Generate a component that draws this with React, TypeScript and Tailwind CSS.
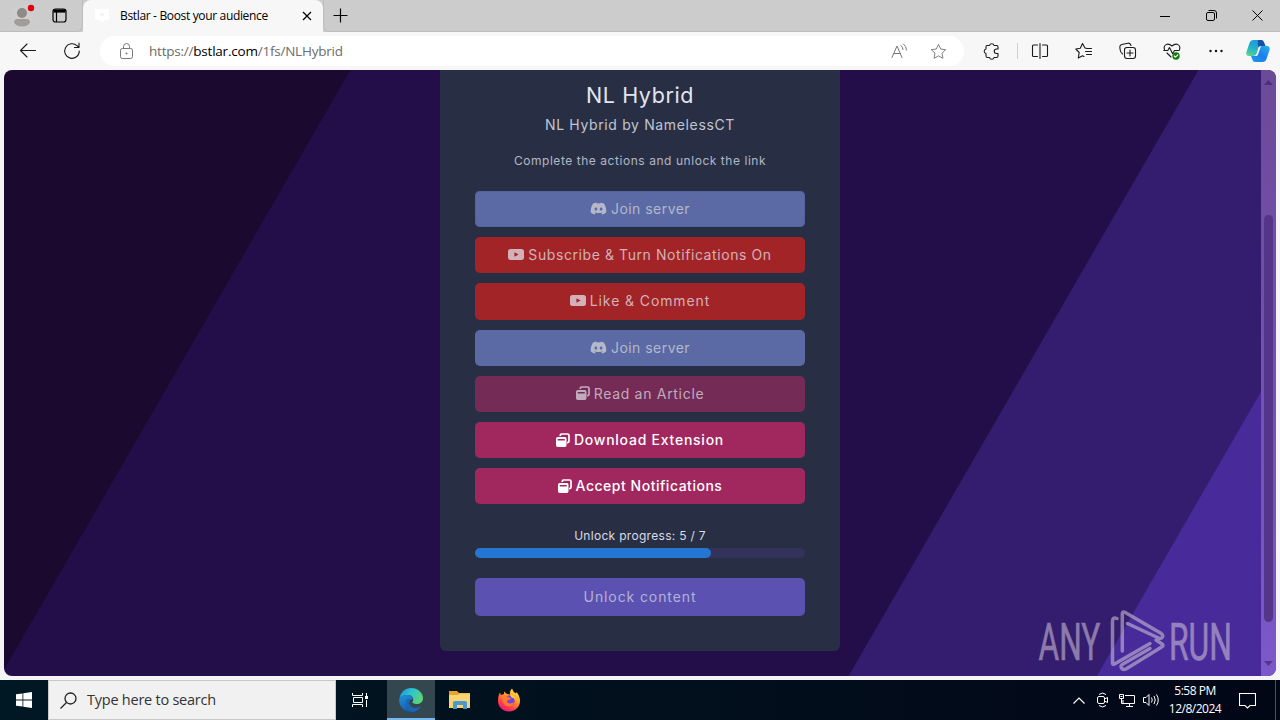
import React from "react";
import { FaDiscord } from "react-icons/fa";

const YoutubeIcon = () => (
  <svg width="16" height="11" viewBox="0 0 15 11" className="shrink-0" preserveAspectRatio="none">
    <path
      fillRule="evenodd"
      fill="currentColor"
      d="M2.500 0h10A2.500 2.500 0 0 1 15 2.500v6A2.500 2.500 0 0 1 12.500 11h-10A2.500 2.500 0 0 1 0 8.500v-6A2.500 2.500 0 0 1 2.500 0ZM6 3.200v4.600l4-2.300Z"
    />
  </svg>
);

const WindowIcon = () => (
  <svg width="14" height="14" viewBox="0 0 14 14" className="shrink-0" fill="none">
    <path d="M4.300 3V2.300Q4.300 1 5.600 1h6Q13 1 13 2.300v6q0 1.300-1.300 1.300H11" stroke="currentColor" strokeWidth="1.700" />
    <path
      fillRule="evenodd"
      fill="currentColor"
      d="M1.700 4h7.100q1.700 0 1.700 1.700v6.600Q10.500 14 8.800 14H1.700Q0 14 0 12.300V5.700Q0 4 1.700 4ZM1.700 6v1.500h7.100V6Z"
    />
  </svg>
);

const actions = [
  { label: "Join server", icon: "discord", style: "bg-[#5b69a5] text-[#b4b8c9] ring-1 ring-inset ring-[#53639f]", text: "tracking-[0.46px]" },
  { label: "Subscribe & Turn Notifications On", icon: "youtube", style: "bg-[#a22427] text-[#d3b1b8]", text: "tracking-[0.58px]" },
  { label: "Like & Comment", icon: "youtube", style: "bg-[#a22427] text-[#d3b1b8]", text: "tracking-[0.9px]" },
  { label: "Join server", icon: "discord", style: "bg-[#5b69a5] text-[#b4b8c9]", text: "tracking-[0.46px]" },
  { label: "Read an Article", icon: "window", style: "bg-[#742b56] text-[#c2aabe]", text: "tracking-[0.7px]" },
  { label: "Download Extension", icon: "window", style: "bg-[#a0285f] text-white", text: "font-medium tracking-[0.75px]" },
  { label: "Accept Notifications", icon: "window", style: "bg-[#a0285f] text-white", text: "font-medium tracking-[0.52px]" },
];

const TitleBar = () => (
  <div className="flex h-8 bg-[#cccccc] text-black">
    <div className="flex w-[83px] items-center rounded-br-md border-b border-r border-[#bdbdbd]">
      <svg width="32" height="32" viewBox="0 0 32 32" className="ml-1">
        <circle cx="18" cy="16" r="11.500" fill="#d0cecd" />
        <circle cx="18" cy="13" r="5" fill="#8d8a88" />
        <path d="M10 22.500q0-3.500 3.500-3.500h9q3.500 0 3.500 3.500-2 4-8 4t-8-4Z" fill="#a09d9b" />
        <circle cx="27" cy="8" r="3.200" fill="#e0000f" />
      </svg>
      <svg width="15" height="15" viewBox="0 0 15 15" className="ml-4" fill="none" stroke="black" strokeWidth="1.200">
        <rect x="1" y="1" width="13" height="13" rx="2.500" />
        <path d="M1.500 3h12" strokeWidth="3.200" />
        <path d="M4.500 4v10" />
      </svg>
    </div>
    <div className="flex w-60 items-center rounded-t-lg bg-[#f7f7f7] pl-2.5">
      <svg width="18" height="16" viewBox="0 0 18 16">
        <path d="M2 1h14v11h-4l-3 3-2-3H2Z" fill="white" />
        <path d="M9 9 6.800 6.800a1.300 1.300 0 0 1 2.200-1.300 1.300 1.300 0 0 1 2.200 1.300Z" fill="#f3f1f8" />
      </svg>
      <span className="ml-[9px] w-[182px] whitespace-nowrap text-[12px] tracking-[-0.34px]">Bstlar - Boost your audience</span>
      <svg width="10" height="10" viewBox="0 0 10 10" stroke="black" strokeWidth="1.200">
        <path d="m1 1 8 8M9 1 1 9" />
      </svg>
    </div>
    <div className="flex flex-1 items-center rounded-bl-md border-b border-l border-[#bdbdbd] pl-[9px]">
      <svg width="15" height="15" viewBox="0 0 15 15" stroke="black" strokeWidth="1.200">
        <path d="M7.500.5v14M.5 7.500h14" />
      </svg>
    </div>
    <div className="flex w-[138px] border-b border-[#bdbdbd]">
      <div className="flex w-[46px] items-center justify-center">
        <svg width="10" height="10" stroke="black"><path d="M0 5.500h10" /></svg>
      </div>
      <div className="flex w-[46px] items-center justify-center">
        <svg width="11" height="11" viewBox="0 0 11 11" fill="none" stroke="black">
          <rect x=".5" y="2.500" width="8" height="8" rx="1.500" />
          <path d="M2.500.5H8A2.500 2.500 0 0 1 10.500 3v5.500" />
        </svg>
      </div>
      <div className="flex w-[46px] items-center justify-center">
        <svg width="11" height="11" stroke="black"><path d="m.5.5 10 10M10.500.5l-10 10" /></svg>
      </div>
    </div>
  </div>
);

const ToolButton = ({ children }: { children: React.ReactNode }) => (
  <div className="flex w-11 shrink-0 items-center justify-center">
    <svg width="18" height="18" viewBox="0 0 18 18" fill="none" stroke="#1b1b1b" strokeWidth="1.100" strokeLinejoin="round" strokeLinecap="round">
      {children}
    </svg>
  </div>
);

const Toolbar = () => (
  <div className="flex h-[38px] bg-[#f7f7f7] pl-1.5">
    <ToolButton><path d="M16.500 8.500H1.500M8 2 1.500 8.500 8 15" /></ToolButton>
    <ToolButton><path d="M16.300 9a7.300 7.300 0 1 1-2.300-5.300L16 5.500M16 1v4.500h-4.500" /></ToolButton>
    <div className="ml-1.5 mt-1 flex h-[30px] w-[864px] items-center rounded-full bg-white pl-5">
      <svg width="13" height="16" viewBox="0 0 13 16" fill="none" stroke="#777">
        <rect x=".5" y="5.500" width="12" height="10" rx="1.800" />
        <path d="M3.500 5.500V3.500a3 3 0 0 1 6 0v2" />
        <circle cx="6.500" cy="10.500" r=".6" fill="#777" />
      </svg>
      <p className="ml-4 flex-1 whitespace-nowrap text-[13.5px] tracking-[-0.22px] text-[#6b6b6b]">
        https://<span className="text-black">bstlar.com</span>/1fs/NLHybrid
      </p>
      <svg width="17" height="16" viewBox="0 0 17 16" fill="none" stroke="#777" strokeLinecap="round">
        <path d="m1 14.500 5-11.500 5 11.500M2.800 10.500h6.400M10 2.500q2 1.500 2 4M12.500 1q3 2.200 3 6" />
      </svg>
      <svg width="17" height="17" viewBox="0 0 18 18" fill="none" stroke="#777" className="ml-[22px] mr-[17px]" strokeLinejoin="round">
        <path d="m9 1.500 2.300 4.900 5.300.7-3.900 3.700 1 5.400L9 13.600l-4.700 2.600 1-5.400-3.900-3.700 5.300-.7Z" />
      </svg>
    </div>
    <div className="ml-[5px] flex">
      <ToolButton><path d="M5 3.500h2.500a2.300 2.300 0 0 1 4.500 0h2.500q1.500 0 1.500 1.500v2h-1.500a2 2 0 0 0 0 4.500H16V14q0 1.500-1.500 1.500H12a2.300 2.300 0 0 1-4.500 0H5.500Q4 15.500 4 14v-2.500a2.300 2.300 0 0 1 0-4.500V5q0-1.500 1-1.500Z" /></ToolButton>
    </div>
    <div className="my-[11px] w-[5px] border-r border-[#cfcfcf]" />
    <ToolButton><path d="M6.500 3h-4Q1.500 3 1.500 4v9.500q0 1 1 1h4M11.500 3h4q1 0 1 1v9.500q0 1-1 1h-4M9 1.500v15" /></ToolButton>
    <ToolButton><path d="M12 6.500 10 6 7.500 1.500 5.300 6.200.8 7l3.400 3.500-.9 5.500 4.200-2.300 1.500.8M11.500 6.500h5M10.500 9.500h6M11.500 12.500h5" /></ToolButton>
    <ToolButton>
      <rect x="5.500" y="5.500" width="11" height="11" rx="2.500" />
      <path d="M11 8v6M8 11h6M3.500 12Q1.500 10.500 1.200 8L.8 5q0-2 2-2.500l6-1.300q2.500-.5 3.200 2.300" />
    </ToolButton>
    <ToolButton>
      <path d="M1.500 7.500C0 3 4.500.2 9 4c4.500-3.800 9-1 7.500 3.500M.8 8.500h4l1.700-3 3 6 2-3h4.700M4 11l4 4" />
      <circle cx="13" cy="14" r="3.700" fill="#107c10" stroke="none" />
      <path d="m11.300 14 1.200 1.200 2.300-2.300" stroke="white" />
    </ToolButton>
    <ToolButton>
      <g fill="#111" stroke="none"><circle cx="3.500" cy="9" r="1.200" /><circle cx="9" cy="9" r="1.200" /><circle cx="14.500" cy="9" r="1.200" /></g>
    </ToolButton>
    <div className="flex w-10 items-center justify-center">
      <svg width="24" height="24" viewBox="0 0 24 24">
        <defs>
          <linearGradient id="copLeft" x1=".5" y1="0" x2=".2" y2="1">
            <stop offset="0" stopColor="#1b9be0" />
            <stop offset=".5" stopColor="#25b0c8" />
            <stop offset="1" stopColor="#55d690" />
          </linearGradient>
          <linearGradient id="copRight" x1="1" y1="0" x2="0" y2="1">
            <stop offset="0" stopColor="#28b4ee" />
            <stop offset=".5" stopColor="#1a80ea" />
            <stop offset="1" stopColor="#2596ee" />
          </linearGradient>
        </defs>
        <path d="M7.500 1H15q2 0 2.700 2.500L19 7h-4q-2 0-2.700 2.500L10.500 15q-.7 2-3 2H3Q-.3 17 .4 13L3.500 4Q4.500 1 7.500 1Z" fill="url(#copLeft)" />
        <path d="M12 1h3.500q2 0 2.600 2.500L19.500 7H15q-1.500 0-2.300 1.500Q11 5 12 1Z" fill="#1650a8" />
        <path d="M16.500 23H9q-2 0-2.700-2.500L5 17h3q2 0 2.700-2.500L12.500 9q.7-2 3-2H21q3.300 0 2.600 4l-3.100 9q-1 3-4 3Z" fill="url(#copRight)" />
        <path d="M12.700 8 15 7l-3 8.500q-.5 1.500-2.500 1.500H8q2-.3 2.700-2.500Z" fill="white" />
      </svg>
    </div>
  </div>
);

const UnlockCard = () => (
  <div className="ml-[436px] h-[581px] w-[400px] rounded-b-md bg-[#282f44] px-[35px] text-center font-[Inter,sans-serif]">
    <h1 className="pt-[9px] text-[21.5px] leading-8 tracking-[0.6px] text-[#e3e6ee]">NL Hybrid</h1>
    <h2 className="mt-1 text-[14px] leading-5 tracking-[0.64px] text-[#c1c5d2]">NL Hybrid by NamelessCT</h2>
    <p className="mt-4 text-[12px] leading-5 tracking-[0.55px] text-[#b2b7c6]">Complete the actions and unlock the link</p>
    <div className="mt-5 flex flex-col gap-2.5">
      {actions.map((a, i) => (
        <div key={i} className={`flex h-[36.2px] items-center justify-center gap-1 rounded-[5px] pb-px ${a.style}`}>
          {a.icon === "discord" && <FaDiscord size={17} />}
          {a.icon === "youtube" && <YoutubeIcon />}
          {a.icon === "window" && <WindowIcon />}
          <span className={`whitespace-nowrap text-[14px] ${a.text}`}>{a.label}</span>
        </div>
      ))}
    </div>
    <p className="mt-6 text-[12px] leading-4 tracking-[0.3px] text-[#d9dce4]">Unlock progress: 5 / 7</p>
    <div className="mt-1 h-2.5 rounded-full bg-[#33325a]">
      <div className="h-full w-5/7 rounded-full bg-[#2576d2]" />
    </div>
    <div className="mt-5 h-[38px] rounded-[5px] bg-[#5a51b0] text-[14px] leading-[38px] tracking-[0.9px] text-[#b5b1d6]">Unlock content</div>
  </div>
);

const Watermark = () => (
  <svg width="194" height="64" viewBox="0 0 194 64" className="absolute left-[1034px] top-[539px] opacity-55">
    <g fill="#d5c8dc" stroke="#d5c8dc" strokeWidth=".6" fontFamily="Roboto, sans-serif" fontSize="51">
      <text transform="translate(.5 50.500) scale(.63 1)" textLength="98" lengthAdjust="spacingAndGlyphs">ANY</text>
      <text transform="translate(131 50.500) scale(.63 1)" textLength="100" lengthAdjust="spacingAndGlyphs">RUN</text>
    </g>
    <g fill="none" stroke="#d5c8dc" strokeWidth="3.500" strokeLinejoin="round" strokeLinecap="round">
      <path d="M84.300 42V5q0-3 3-1.500L122.500 24q4 2.500 1 5-2 1-4-.5L89.500 14.500" />
      <path d="M79 9.500q-4.500-2-4.500 3V54q0 2 2 1l35.500-20.500" />
      <path d="M118 31l6 4q2 1.500 0 2.800L88 60q-3 1.500-4.500-1t1.500-4l27-15.500" />
    </g>
  </svg>
);

const Page = () => (
  <div className="flex h-[610px] bg-[#f5f5f8] px-1 pb-1">
    <div className="relative flex w-[1272px] overflow-hidden rounded-lg bg-[linear-gradient(120deg,#1b0930_299.500px,#240e49_300.500px,#240e49_1034px,#341c6e_1035px,#341c6e_1249px,#482a9b_1250px)]">
      <UnlockCard />
      <div className="ml-auto flex w-[15px] flex-col items-center bg-linear-to-b from-[#6b4a98] to-[#7c58ca]">
        <svg width="9" height="5" className="mt-[10px]"><path d="M4.500 0 9 5H0Z" fill="#4c2f77" /></svg>
        <div className="mt-[130px] h-[407px] w-[9px] rounded-full bg-[#553589]" />
        <svg width="9" height="5" className="mt-[39px]"><path d="M0 0h9L4.500 5Z" fill="#553589" /></svg>
      </div>
      <Watermark />
    </div>
  </div>
);

const Taskbar = () => (
  <div className="flex h-10 bg-linear-to-r from-[#001823] to-[#020716] text-white">
    <div className="flex w-12 items-center justify-center">
      <svg width="16" height="16" viewBox="0 0 16 16" fill="white">
        <path d="M0 2.300 6.500 1.400v6.200H0ZM7.300 1.300 16 0v7.600H7.300ZM0 8.400h6.500v6.200L0 13.700ZM7.300 8.400H16V16l-8.700-1.300Z" />
      </svg>
    </div>
    <div className="flex w-72 items-center border border-[#c9c9c9] bg-[#f1f1f1] pl-[11px]">
      <svg width="17" height="17" viewBox="0 0 17 17" fill="none" stroke="#222" strokeWidth="1.300">
        <circle cx="10.500" cy="6.500" r="5.500" />
        <path d="m6.500 10.500-6 6" />
      </svg>
      <span className="ml-[10px] text-[14.500px] tracking-[-0.24px] text-[#333]">Type here to search</span>
    </div>
    <div className="flex w-12 items-center justify-center">
      <svg width="16" height="16" viewBox="0 0 16 16" fill="none" stroke="white">
        <path d="M.5 1v2.500h10V1M.5 15v-2.500h10V15M1.500 5.500h9v5h-9zM14.500 1v3M14.500 8v7" />
        <path d="M13 5.500h3" strokeWidth="3" />
      </svg>
    </div>
    <div className="ml-[3px] flex w-12 items-center justify-center border-b-2 border-[#76b9ed] bg-[#34474f] pt-0.5">
      <svg width="24" height="24" viewBox="0 0 24 24">
        <defs>
          <linearGradient id="edgeTop" x1="0" y1="0" x2="1" y2=".4">
            <stop offset="0" stopColor="#178fd8" />
            <stop offset=".5" stopColor="#2cc3d2" />
            <stop offset="1" stopColor="#58d47b" />
          </linearGradient>
          <linearGradient id="edgeBody" x1="0" y1="0" x2=".6" y2="1">
            <stop offset="0" stopColor="#2193da" />
            <stop offset="1" stopColor="#1356a3" />
          </linearGradient>
        </defs>
        <path d="M.5 10.500C1.500 4 6.500 0 12 0c7 0 12 5 12 10 0 4-3 6-6.500 6-3 0-4.500-1.200-4-2 1.500-2 1-6.500-4-7C5.500 6.700 2 8 .5 10.500Z" fill="url(#edgeTop)" />
        <path d="M.2 11C2 7.500 6 6.500 9.500 7c2.500.4 4.300 2.200 4.500 4-3.500 0-5 3.500-3.500 6.500 2 3.500 7 4 11.500 1-2 3.500-5.500 5.500-10 5.500C5 24-.5 18 .2 11Z" fill="url(#edgeBody)" />
        <path d="M8.500 11c-3.500 4-2 11 4.500 13 4-.2 7.300-2.500 9-5.500-5 2.500-9.500 1.500-11.300-1.700C9.500 14.500 10.500 12 12 11Z" fill="#1b65b3" />
      </svg>
    </div>
    <div className="ml-px flex w-12 items-center justify-center">
      <svg width="22" height="18" viewBox="0 0 22 18">
        <path d="M0 0h8l2 2h11v15H0Z" fill="#e6a52c" />
        <path d="M0 4h9l1.500-1.500H21V17H0Z" fill="#f8d473" />
        <path d="M4 18v-6q0-2 2-2h10q2 0 2 2v6h-4v-4H8v4Z" fill="#4a9ad0" />
        <path d="M8 14.500h6V17H8Z" fill="#f8d473" />
      </svg>
    </div>
    <div className="ml-px flex w-12 items-center justify-center">
      <svg width="24" height="24" viewBox="0 0 24 24">
        <defs>
          <linearGradient id="foxFire" x1=".8" y1="0" x2=".2" y2="1">
            <stop offset="0" stopColor="#fff04a" />
            <stop offset=".4" stopColor="#ff9a24" />
            <stop offset=".75" stopColor="#ff3850" />
            <stop offset="1" stopColor="#e31587" />
          </linearGradient>
        </defs>
        <path d="M3 4.500 4 7l3-1V3.500L10 6l3 .5Q12.500 3 15 .5q1 3.500 4 5l.5-1.500Q23 8 23 13c0 6-5 10.500-11 10.500S1 19 1 13c0-3 .5-6 2-8.500Z" fill="url(#foxFire)" />
        <circle cx="12.500" cy="12.500" r="5.200" fill="#7542e5" />
        <path d="M5 8q4-2 6 1l3 1q-.5 2-3.500 2.300-1.500 2 1.500 3 3 .5 5-1-1.500 4.500-6 4.200Q5 17.500 5 8Z" fill="#ff7a2c" />
        <path d="M13 6.500q5 1 5.500 6-1.500-3-4-3Z" fill="#ffcf36" />
      </svg>
    </div>
    <div className="ml-auto flex">
      <div className="flex w-6 items-center justify-center">
        <svg width="12" height="7" fill="none" stroke="white" strokeWidth="1.200"><path d="m.5 6.500 5.500-5.500 5.500 5.500" /></svg>
      </div>
      <div className="flex w-6 items-center justify-center">
        <svg width="12" height="16" viewBox="0 0 12 16" fill="none" stroke="white">
          <rect x=".5" y="4.500" width="7" height="7" rx="1.500" />
          <path d="m7.500 7 3-1.500v5l-3-1.500M2 2.500Q5.500-.5 9 2.500M2 13.500q3.500 3 7 0" />
        </svg>
      </div>
      <div className="flex w-6 items-center justify-center">
        <svg width="16" height="15" viewBox="0 0 16 15" fill="none" stroke="white">
          <path d="M6 2.500h9.500v8H4V7M10.500 10.500v3M7 13.500h7M.5 1.500h4v4h-4zM2.500 5.500v5H4M1.500 3.500h2" />
        </svg>
      </div>
      <div className="flex w-6 items-center justify-center">
        <svg width="17" height="14" viewBox="0 0 17 14" fill="none" stroke="white">
          <path d="M.5 4.500h2.500l3-3v11l-3-3H.5ZM8.500 4.500q1.500 2.500 0 5M11 3q2.500 4 0 8M13.500 1.500q3.500 5.500 0 11" />
        </svg>
      </div>
      <div className="flex w-16 flex-col items-center justify-center whitespace-nowrap text-[12px] leading-[18px] tracking-[-0.5px]">
        <span>5:58 PM</span>
        <span>12/8/2024</span>
      </div>
      <div className="flex w-10 items-center justify-center">
        <svg width="17" height="17" viewBox="0 0 17 17" fill="none" stroke="white" strokeWidth="1.100">
          <path d="M.5 1.500h16v12H11L8.500 16 6 13.500H.5Z" />
        </svg>
      </div>
      <div className="mr-1 w-[9px] border-r border-[#4a525c]" />
    </div>
  </div>
);

const App = () => {
  return (
    <main className="h-[720px] w-[1280px] overflow-hidden font-['Open_Sans',sans-serif]">
      <TitleBar />
      <Toolbar />
      <Page />
      <Taskbar />
    </main>
  );
};

export default App;
